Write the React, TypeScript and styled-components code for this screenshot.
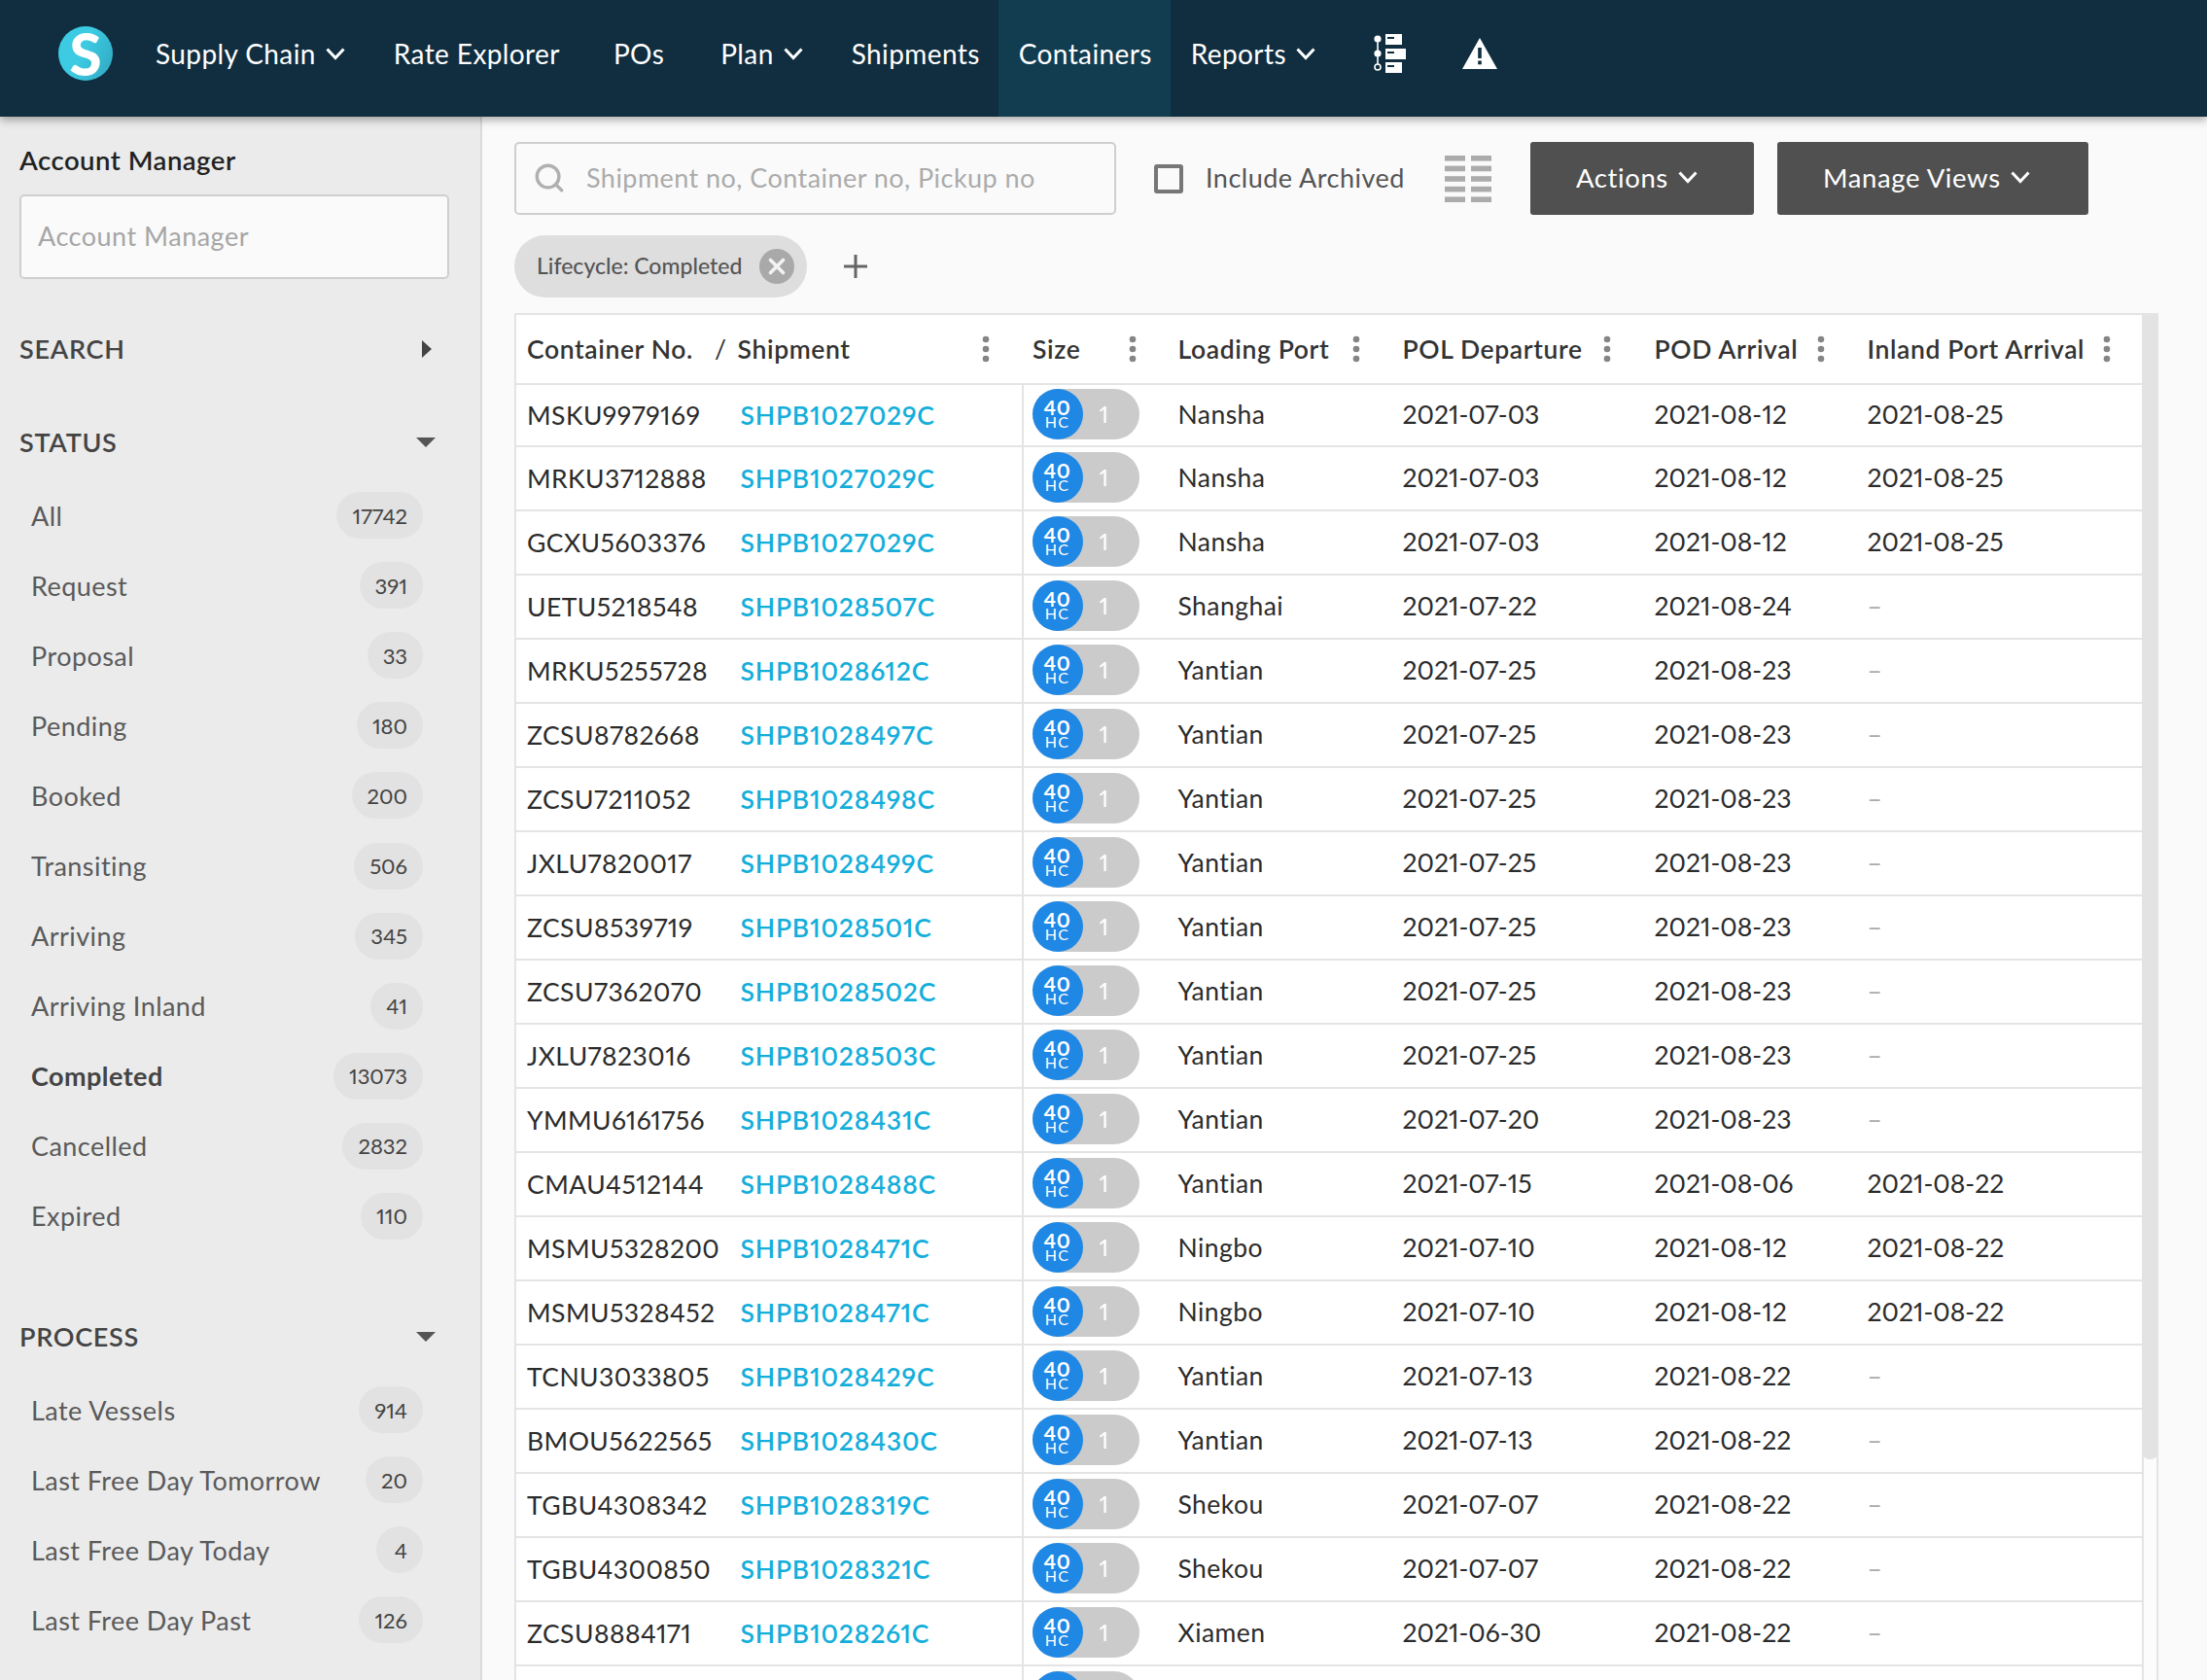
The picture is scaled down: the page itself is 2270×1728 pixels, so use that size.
import React from 'react';
import styled, { createGlobalStyle } from 'styled-components';
import { Search, X } from 'lucide-react';

const GlobalStyle = createGlobalStyle`
  html, body {
    margin: 0;
    padding: 0;
    height: 100%;
    overflow: hidden;
    background: #fafafa;
    font-family: Lato, "Open Sans", sans-serif;
    font-variant-numeric: proportional-nums;
  }
  * { box-sizing: border-box; }
`;

const Page = styled.div`
  width: 2270px;
  height: 1728px;
  overflow: hidden;
  display: flex;
  flex-direction: column;
`;

// top bar
const TopBar = styled.header`
  position: relative;
  z-index: 2;
  flex: 0 0 120px;
  display: flex;
  align-items: stretch;
  padding-left: 60px;
  background: #102e40;
  box-shadow: 0 3px 9px rgba(0, 0, 0, 0.35);
`;

const Logo = styled.div`
  align-self: center;
  flex: 0 0 56px;
  height: 56px;
  margin: -10px 44px 0 0;
  border-radius: 50%;
  background: linear-gradient(115deg, #3ccbe2 45%, #2fa6bf 100%);
  color: #fff;
  font-size: 60px;
  font-weight: 900;
  line-height: 56px;
  text-align: center;
`;

const NavItem = styled.div<{ $pl: number; $pr: number; $active?: boolean }>`
  display: flex;
  align-items: center;
  gap: 10px;
  padding: 0 ${p => p.$pr}px 10px ${p => p.$pl}px;
  background: ${p => (p.$active ? '#123d51' : 'transparent')};
  color: #fff;
  font-size: 28px;
  letter-spacing: 0.4px;
`;

const NavIcons = styled.div`
  display: flex;
  align-items: center;
  gap: 55px;
  margin-left: 20px;
  padding-bottom: 10px;
`;

const ChevronGlyph = styled.svg`
  flex: none;
  fill: none;
  stroke: currentColor;
  stroke-width: 3;
`;

// body
const Body = styled.div`
  flex: 1;
  display: flex;
  min-height: 0;
`;

const Sidebar = styled.aside`
  flex: 0 0 495px;
  padding: 29px 32px 0 20px;
  background: #ebebeb;
  border-right: 2px solid #dadada;
`;

const FieldLabel = styled.div`
  font-size: 27.5px;
  line-height: 32px;
  font-weight: 600;
  color: #222;
  letter-spacing: 0.5px;
  margin-bottom: 19px;
`;

const FieldInput = styled.div`
  width: 442px;
  height: 87px;
  padding: 0 0 2px 17px;
  display: flex;
  align-items: center;
  background: #fafafa;
  border: 2px solid #cfcfcf;
  border-radius: 5px;
  color: #a6a6a6;
  font-size: 27px;
  letter-spacing: 0.5px;
`;

const SectionHead = styled.div<{ $mt: number; $mb?: number }>`
  display: flex;
  align-items: center;
  justify-content: space-between;
  height: 40px;
  padding-bottom: 2px;
  margin-top: ${p => p.$mt}px;
  margin-bottom: ${p => p.$mb ?? 0}px;
  color: #444;
  font-size: 27px;
  font-weight: 600;
  letter-spacing: 0.7px;
`;

const CaretDown = styled.span`
  width: 0;
  height: 0;
  margin: 2px 14px 0 0;
  border-left: 10px solid transparent;
  border-right: 10px solid transparent;
  border-top: 10px solid #555;
`;

const CaretRight = styled.span`
  width: 0;
  height: 0;
  margin: 2px 18px 0 0;
  border-top: 9px solid transparent;
  border-bottom: 9px solid transparent;
  border-left: 10px solid #444;
`;

const SideRow = styled.div<{ $bold?: boolean }>`
  height: 72.1px;
  display: flex;
  align-items: center;
  justify-content: space-between;
  padding: 0 27px 2px 12px;
  color: ${p => (p.$bold ? '#444' : '#5a5a5a')};
  font-size: 27px;
  font-weight: ${p => (p.$bold ? 700 : 400)};
  letter-spacing: 0.45px;
`;

const Count = styled.span`
  min-width: 48px;
  height: 48px;
  padding: 0 16px;
  display: flex;
  align-items: center;
  justify-content: flex-end;
  border-radius: 24px;
  background: #e2e2e2;
  color: #444;
  font-size: 22px;
  font-weight: 400;
  letter-spacing: 0;
`;

const Main = styled.main`
  flex: 1;
  padding: 26px 0 0 33px;
  min-width: 0;
`;

const Toolbar = styled.div`
  display: flex;
  align-items: center;
  height: 75px;
`;

const SearchBox = styled.div`
  flex: 0 0 619px;
  height: 75px;
  display: flex;
  align-items: center;
  gap: 21px;
  padding: 0 0 2px 17px;
  border: 2px solid #cfcfcf;
  border-radius: 5px;
  background: #fafafa;
  color: #ababab;
  font-size: 27px;
  letter-spacing: 0.45px;
`;

const CheckBox = styled.span`
  flex: 0 0 30px;
  height: 30px;
  margin-left: 39px;
  border: 4px solid #777;
  border-radius: 3px;
`;

const CheckLabel = styled.span`
  margin-left: 23px;
  padding-bottom: 2px;
  color: #555;
  font-size: 27px;
  letter-spacing: 0.5px;
`;

const ColumnsIcon = styled.svg`
  flex: 0 0 48px;
  margin-left: 41px;
`;

const DarkButton = styled.div<{ $w: number; $ml: number }>`
  flex: 0 0 ${p => p.$w}px;
  height: 75px;
  margin-left: ${p => p.$ml}px;
  padding: 0 0 2px 47px;
  display: flex;
  align-items: center;
  gap: 10px;
  border-radius: 3px;
  background: #505050;
  color: #fff;
  font-size: 27.5px;
  letter-spacing: 0.6px;
`;

const FilterRow = styled.div`
  display: flex;
  align-items: center;
  gap: 37px;
  height: 64px;
  margin-top: 21px;
`;

const Chip = styled.div`
  height: 64px;
  width: 301px;
  display: flex;
  align-items: center;
  justify-content: space-between;
  padding: 0 13px 0 23px;
  border-radius: 32px;
  background: #dedede;
  color: #555;
  font-size: 23px;
  font-weight: 500;
`;

const ChipText = styled.span`
  padding-bottom: 2px;
`;

const ChipClose = styled.span`
  width: 36px;
  height: 36px;
  display: flex;
  align-items: center;
  justify-content: center;
  border-radius: 50%;
  background: #a9a9a9;
  color: #f2f2f2;
`;

const TableWrap = styled.div`
  display: flex;
  width: 1691px;
  margin-top: 16px;
  border-top: 2px solid #e4e4e4;
  border-left: 2px solid #e4e4e4;
  background: #fff;
`;

const Rows = styled.div`
  flex: 1;
  min-width: 0;
`;

const Row = styled.div<{ $head?: boolean }>`
  display: grid;
  grid-template-columns: 521.5px 159px 231px 259px 219px 1fr;
  height: ${p => (p.$head ? '72px' : '66px')};
  padding-bottom: ${p => (p.$head ? 0 : 3)}px;
  border-bottom: 2px solid #e4e4e4;
  color: ${p => (p.$head ? '#333' : '#2b2b2b')};
  font-size: 26.5px;
  font-weight: ${p => (p.$head ? 600 : 400)};
  letter-spacing: ${p => (p.$head ? 0.62 : 0.45)}px;
  &:nth-child(2) {
    height: 64.3px;
  }
`;

const Cell = styled.div<{ $divider?: boolean }>`
  display: flex;
  align-items: center;
  min-width: 0;
  white-space: nowrap;
  ${p => p.$divider && 'border-right: 2px solid #e4e4e4; margin-bottom: -3px;'}
`;

const DateCell = styled(Cell)`
  letter-spacing: 0;
`;

const HeadCell = styled(Cell)<{ $dots: number; $pl?: number }>`
  position: relative;
  padding-left: ${p => p.$pl ?? 0}px;
  & > svg {
    position: absolute;
    left: ${p => p.$dots}px;
    top: 50%;
    transform: translateY(-50%);
  }
`;

const HeadNo = styled.span`
  flex: 0 0 204px;
  padding-left: 11px;
`;

const HeadSlash = styled.span`
  margin-right: 11px;
  font-weight: 400;
`;

const ContainerNo = styled.span`
  flex: 0 0 230.5px;
  padding-left: 11px;
`;

const ShipLink = styled.a`
  color: #14aedb;
  font-weight: 600;
  letter-spacing: 0.8px;
  text-decoration: none;
`;

const SizePill = styled.div`
  width: 110px;
  height: 52px;
  margin-left: 9px;
  display: flex;
  align-items: center;
  border-radius: 26px;
  background: #cbcbcb;
  color: #fff;
  font-size: 24px;
`;

const SizeBadge = styled.div`
  flex: 0 0 52px;
  height: 52px;
  display: flex;
  flex-direction: column;
  align-items: center;
  justify-content: center;
  margin-right: 17px;
  border-radius: 50%;
  background: #1f88e5;
  line-height: 1;
`;

const SizeNum = styled.span`
  font-size: 21px;
  font-weight: 700;
  letter-spacing: 0.8px;
  line-height: 17px;
`;

const SizeType = styled.span`
  font-size: 16px;
  font-weight: 400;
  line-height: 14px;
  letter-spacing: 1.2px;
`;

const Muted = styled.span`
  color: #aaa;
`;

const ScrollTrack = styled.div`
  flex: 0 0 17px;
  border-left: 2px solid #e4e4e4;
  border-right: 2px solid #e4e4e4;
  background: #fcfcfc;
`;

const ScrollThumb = styled.div`
  height: 1177px;
  margin: 0 -2px;
  border-radius: 0 0 8px 8px;
  background: #e3e3e3;
`;

const Chevron: React.FC = () => (
  <ChevronGlyph width="20" height="13" viewBox="0 0 20 13">
    <polyline points="1.5,1.5 10,10.5 18.5,1.5" />
  </ChevronGlyph>
);

const Dots: React.FC = () => (
  <svg width="8" height="28" viewBox="0 0 8 28" fill="#858585">
    <circle cx="4" cy="4" r="3.3" />
    <circle cx="4" cy="14" r="3.3" />
    <circle cx="4" cy="24" r="3.3" />
  </svg>
);

const TimelineIcon: React.FC = () => (
  <svg width="36" height="42" viewBox="0 0 36 42" fill="#fff">
    <rect x="3.2" y="6" width="1.6" height="30" />
    <circle cx="4" cy="6" r="3.6" />
    <circle cx="4" cy="21" r="3.6" />
    <circle cx="4" cy="35" r="3" fill="#102e40" stroke="#fff" strokeWidth="1.6" />
    <rect x="12" y="1" width="17" height="11" />
    <rect x="12" y="16" width="21" height="11" />
    <rect x="12" y="30" width="17" height="11" />
    <g fill="#102e40">
      <rect x="14" y="4" width="7" height="2" />
      <rect x="14" y="19" width="7" height="2" />
      <rect x="14" y="33" width="7" height="2" />
    </g>
  </svg>
);

const WarningIcon: React.FC = () => (
  <svg width="36" height="32" viewBox="0 0 36 32">
    <path d="M18 0 L36 32 L0 32 Z" fill="#fff" />
    <rect x="16.2" y="10" width="3.6" height="11" fill="#102e40" />
    <rect x="16.2" y="23.5" width="3.6" height="3.8" fill="#102e40" />
  </svg>
);

const ColumnsGlyph: React.FC = () => (
  <ColumnsIcon width="48" height="48" viewBox="0 0 48 48" fill="#ababab">
    {[0, 10.6, 21.2, 31.8, 42.4].map(y => (
      <g key={y}>
        <rect x="0" y={y} width="21" height="5.6" />
        <rect x="27" y={y} width="21" height="5.6" />
      </g>
    ))}
  </ColumnsIcon>
);

const PlusIcon: React.FC = () => (
  <svg width="26" height="26" viewBox="0 0 26 26" stroke="#666" strokeWidth="3">
    <path d="M13 1 V25 M1 13 H25" />
  </svg>
);

const navItems = [
  { label: 'Supply Chain', pl: 0, pr: 24, menu: true },
  { label: 'Rate Explorer', pl: 26, pr: 27 },
  { label: 'POs', pl: 28, pr: 29 },
  { label: 'Plan', pl: 29, pr: 24, menu: true },
  { label: 'Shipments', pl: 26, pr: 19 },
  { label: 'Containers', pl: 21, pr: 19, active: true },
  { label: 'Reports', pl: 21, pr: 40, menu: true },
];

const statusItems: [string, string][] = [
  ['All', '17742'],
  ['Request', '391'],
  ['Proposal', '33'],
  ['Pending', '180'],
  ['Booked', '200'],
  ['Transiting', '506'],
  ['Arriving', '345'],
  ['Arriving Inland', '41'],
  ['Completed', '13073'],
  ['Cancelled', '2832'],
  ['Expired', '110'],
];

const processItems: [string, string][] = [
  ['Late Vessels', '914'],
  ['Last Free Day Tomorrow', '20'],
  ['Last Free Day Today', '4'],
  ['Last Free Day Past', '126'],
];

const heads = [
  { label: 'Size', dots: 108.5, pl: 9.5 },
  { label: 'Loading Port', dots: 179.5, pl: 0 },
  { label: 'POL Departure', dots: 206.5, pl: 0 },
  { label: 'POD Arrival', dots: 167.5, pl: 0 },
  { label: 'Inland Port Arrival', dots: 242.5, pl: 0 },
];

const containers: [string, string, string, string, string, string][] = [
  ['MSKU9979169', 'SHPB1027029C', 'Nansha', '2021-07-03', '2021-08-12', '2021-08-25'],
  ['MRKU3712888', 'SHPB1027029C', 'Nansha', '2021-07-03', '2021-08-12', '2021-08-25'],
  ['GCXU5603376', 'SHPB1027029C', 'Nansha', '2021-07-03', '2021-08-12', '2021-08-25'],
  ['UETU5218548', 'SHPB1028507C', 'Shanghai', '2021-07-22', '2021-08-24', ''],
  ['MRKU5255728', 'SHPB1028612C', 'Yantian', '2021-07-25', '2021-08-23', ''],
  ['ZCSU8782668', 'SHPB1028497C', 'Yantian', '2021-07-25', '2021-08-23', ''],
  ['ZCSU7211052', 'SHPB1028498C', 'Yantian', '2021-07-25', '2021-08-23', ''],
  ['JXLU7820017', 'SHPB1028499C', 'Yantian', '2021-07-25', '2021-08-23', ''],
  ['ZCSU8539719', 'SHPB1028501C', 'Yantian', '2021-07-25', '2021-08-23', ''],
  ['ZCSU7362070', 'SHPB1028502C', 'Yantian', '2021-07-25', '2021-08-23', ''],
  ['JXLU7823016', 'SHPB1028503C', 'Yantian', '2021-07-25', '2021-08-23', ''],
  ['YMMU6161756', 'SHPB1028431C', 'Yantian', '2021-07-20', '2021-08-23', ''],
  ['CMAU4512144', 'SHPB1028488C', 'Yantian', '2021-07-15', '2021-08-06', '2021-08-22'],
  ['MSMU5328200', 'SHPB1028471C', 'Ningbo', '2021-07-10', '2021-08-12', '2021-08-22'],
  ['MSMU5328452', 'SHPB1028471C', 'Ningbo', '2021-07-10', '2021-08-12', '2021-08-22'],
  ['TCNU3033805', 'SHPB1028429C', 'Yantian', '2021-07-13', '2021-08-22', ''],
  ['BMOU5622565', 'SHPB1028430C', 'Yantian', '2021-07-13', '2021-08-22', ''],
  ['TGBU4308342', 'SHPB1028319C', 'Shekou', '2021-07-07', '2021-08-22', ''],
  ['TGBU4300850', 'SHPB1028321C', 'Shekou', '2021-07-07', '2021-08-22', ''],
  ['ZCSU8884171', 'SHPB1028261C', 'Xiamen', '2021-06-30', '2021-08-22', ''],
];

export default function App() {
  return (
    <Page>
      <GlobalStyle />
      <TopBar>
        <Logo>S</Logo>
        {navItems.map(item => (
          <NavItem key={item.label} $pl={item.pl} $pr={item.pr} $active={item.active}>
            {item.label}
            {item.menu && <Chevron />}
          </NavItem>
        ))}
        <NavIcons>
          <TimelineIcon />
          <WarningIcon />
        </NavIcons>
      </TopBar>
      <Body>
        <Sidebar>
          <FieldLabel>Account Manager</FieldLabel>
          <FieldInput>Account Manager</FieldInput>
          <SectionHead $mt={52}>
            SEARCH
            <CaretRight />
          </SectionHead>
          <SectionHead $mt={56} $mb={20}>
            STATUS
            <CaretDown />
          </SectionHead>
          {statusItems.map(([label, count]) => (
            <SideRow key={label} $bold={label === 'Completed'}>
              {label}
              <Count>{count}</Count>
            </SideRow>
          ))}
          <SectionHead $mt={67} $mb={20}>
            PROCESS
            <CaretDown />
          </SectionHead>
          {processItems.map(([label, count]) => (
            <SideRow key={label}>
              {label}
              <Count>{count}</Count>
            </SideRow>
          ))}
        </Sidebar>
        <Main>
          <Toolbar>
            <SearchBox>
              <Search size={34} strokeWidth={2.4} color="#b0b0b0" />
              Shipment no, Container no, Pickup no
            </SearchBox>
            <CheckBox />
            <CheckLabel>Include Archived</CheckLabel>
            <ColumnsGlyph />
            <DarkButton $w={230} $ml={40}>
              Actions
              <Chevron />
            </DarkButton>
            <DarkButton $w={320} $ml={24}>
              Manage Views
              <Chevron />
            </DarkButton>
          </Toolbar>
          <FilterRow>
            <Chip>
              <ChipText>Lifecycle: Completed</ChipText>
              <ChipClose>
                <X size={26} strokeWidth={3.4} />
              </ChipClose>
            </Chip>
            <PlusIcon />
          </FilterRow>
          <TableWrap>
            <Rows>
              <Row $head>
                <HeadCell $dots={479}>
                  <HeadNo>Container No.</HeadNo>
                  <HeadSlash>/</HeadSlash>
                  Shipment
                  <Dots />
                </HeadCell>
                {heads.map(h => (
                  <HeadCell key={h.label} $dots={h.dots} $pl={h.pl}>
                    {h.label}
                    <Dots />
                  </HeadCell>
                ))}
              </Row>
              {containers.map(([no, ship, port, pol, pod, inland], i) => (
                <Row key={no + i}>
                  <Cell $divider>
                    <ContainerNo>{no}</ContainerNo>
                    <ShipLink>{ship}</ShipLink>
                  </Cell>
                  <Cell>
                    <SizePill>
                      <SizeBadge>
                        <SizeNum>40</SizeNum>
                        <SizeType>HC</SizeType>
                      </SizeBadge>
                      1
                    </SizePill>
                  </Cell>
                  <Cell>{port}</Cell>
                  <DateCell>{pol}</DateCell>
                  <DateCell>{pod}</DateCell>
                  <DateCell>{inland || <Muted>–</Muted>}</DateCell>
                </Row>
              ))}
              <Row>
                <Cell $divider />
                <Cell>
                  <SizePill>
                    <SizeBadge />
                  </SizePill>
                </Cell>
              </Row>
            </Rows>
            <ScrollTrack>
              <ScrollThumb />
            </ScrollTrack>
          </TableWrap>
        </Main>
      </Body>
    </Page>
  );
}
